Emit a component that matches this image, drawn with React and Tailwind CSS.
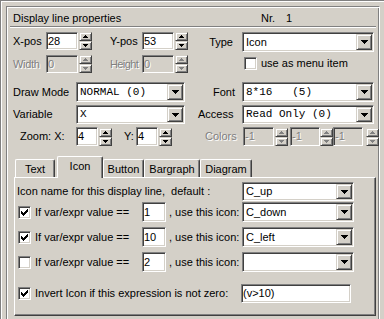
import React from "react";

const sunken =
  "border border-t-[#808080] border-l-[#808080] border-r-white border-b-white shadow-[inset_1px_1px_0_#404040,inset_-1px_-1px_0_#d4d0c8]";
const raised =
  "border border-t-[#d4d0c8] border-l-[#d4d0c8] border-r-[#404040] border-b-[#404040] shadow-[inset_1px_1px_0_#ffffff,inset_-1px_-1px_0_#808080]";
const dis = "text-[#808080] [text-shadow:1px_1px_0_#ffffff]";
const mono = "font-['Liberation_Mono','Courier_New',monospace] text-[11px]";

function Up({ color }) {
  return (
    <svg width="5" height="3" viewBox="0 0 5 3" className="block">
      <path d="M2 0h1v1h1v1h1v1H0V2h1V1h1z" fill={color} />
    </svg>
  );
}
function Down({ color }) {
  return (
    <svg width="5" height="3" viewBox="0 0 5 3" className="block">
      <path d="M0 0h5v1H4v1H3v1H2V2H1V1H0z" fill={color} />
    </svg>
  );
}

function Spin({ disabled, tall }) {
  const c = disabled ? "#808080" : "#000000";
  const half = tall
    ? "h-[10px] w-full flex items-center justify-center bg-[#d4d0c8] " + raised
    : "h-[9px] w-full flex items-center justify-center bg-[#d4d0c8] " + raised;
  return (
    <div className="flex flex-col w-[13px] shrink-0">
      <div className={half}>
        <Up color={c} />
      </div>
      <div className={half}>
        <Down color={c} />
      </div>
    </div>
  );
}

function Input({ value, w, h, disabled, className = "" }) {
  return (
    <div
      className={
        sunken +
        " shrink-0 flex items-center px-[1px] " +
        (disabled ? "bg-[#d4d0c8] " + dis : "bg-white text-black") +
        " " +
        w +
        " " +
        h +
        " " +
        className
      }
    >
      <span>{value}</span>
    </div>
  );
}

function Select({ value, w, h, isMono }) {
  return (
    <div className={sunken + " bg-white shrink-0 flex items-stretch p-[1px] " + w + " " + h}>
      <div className={"flex-1 flex items-center pl-[2px] whitespace-pre " + (isMono ? mono : "")}>
        {value}
      </div>
      <div className={raised + " w-[16px] bg-[#d4d0c8] flex items-center justify-center"}>
        <svg width="7" height="4" viewBox="0 0 7 4" className="block">
          <path d="M0 0h7v1H6v1H5v1H4v1H3V3H2V2H1V1H0z" fill="#000" />
        </svg>
      </div>
    </div>
  );
}

function Check({ checked }) {
  return (
    <div className={sunken + " w-[13px] h-[13px] bg-white shrink-0 flex items-center justify-center"}>
      {checked && (
        <svg width="7" height="7" viewBox="0 0 7 7" className="block">
          <path
            d="M6 0h1v1h-1z M5 1h2v1h-2z M0 2h1v1h-1z M4 2h3v1h-3z M0 3h2v1h-2z M3 3h3v1h-3z M0 4h5v1h-5z M1 5h3v1h-3z M2 6h1v1h-1z"
            fill="#000"
          />
        </svg>
      )}
    </div>
  );
}

function Tab({ label, w, selected }) {
  if (selected) {
    return (
      <div
        className={
          "relative z-10 -mb-[1px] h-[22px] bg-[#d4d0c8] border-l border-t border-r border-l-white border-t-white border-r-[#404040] rounded-t-[2px] shadow-[inset_-1px_0_0_#808080] flex justify-center pt-[3px] " +
          w
        }
      >
        {label}
      </div>
    );
  }
  return (
    <div
      className={
        "h-[18px] bg-[#d4d0c8] border-l border-t border-r border-l-white border-t-white border-r-[#404040] rounded-t-[2px] shadow-[inset_-1px_0_0_#808080] flex justify-center pt-[3px] " +
        w
      }
    >
      {label}
    </div>
  );
}

function IfRow({ checked, val, icon, mt }) {
  return (
    <div className={"flex items-center h-[20px] " + mt}>
      <div className="w-[20px] pl-[3px] flex items-center">
        <Check checked={checked} />
      </div>
      <div className="w-[107px]">If var/expr value ==</div>
      <Input value={val} w="w-[24px]" h="h-[20px]" />
      <div className="w-[76px] pl-[3px]">, use this icon:</div>
      <Select value={icon} w="w-[112px]" h="h-[20px]" />
    </div>
  );
}

export default function App() {
  return (
    <div className="w-[384px] h-[319px] overflow-hidden bg-[#d4d0c8] font-['Liberation_Sans',Arial,sans-serif] text-[11px] leading-[13px] text-black">
      <div className="w-full h-full border-l border-t border-[#808080]">
        <div className="w-full h-full border-l border-t border-white">
          {/* group box */}
          <div className="ml-[4px] mt-[4px] w-[374px] h-[320px] border border-t-[#808080] border-l-[#808080] border-r-white border-b-white shadow-[inset_1px_1px_0_#ffffff,inset_-1px_-1px_0_#808080]">
            {/* header */}
            <div className="h-[19px] pt-[3px] flex items-center pl-[6px]">
              <span className="w-[248px]">Display line properties</span>
              <span>Nr.</span>
              <span className="ml-[11px]">1</span>
            </div>
            <div className="ml-[3px] w-[366px] h-[2px] border-t border-b border-t-[#808080] border-b-white" />

            {/* row 1 */}
            <div className="mt-[4px] h-[20px] flex items-start pl-[6px]">
              <div className="w-[33px] h-[18px] flex items-center">X-pos</div>
              <Input value="28" w="w-[32px]" h="h-[18px]" />
              <div className="ml-[1px]">
                <Spin />
              </div>
              <div className="ml-[18px] w-[32px] h-[18px] flex items-center">Y-pos</div>
              <Input value="53" w="w-[32px]" h="h-[18px]" />
              <div className="ml-[1px]">
                <Spin />
              </div>
              <div className="w-[54px] h-[20px] flex items-center justify-end pr-[9px]">Type</div>
              <Select value="Icon" w="w-[132px]" h="h-[20px]" />
            </div>

            {/* row 2 */}
            <div className="mt-[3px] h-[18px] flex items-start pl-[6px]">
              <div className={"w-[33px] h-[18px] flex items-center tracking-[-0.3px] " + dis}>Width</div>
              <Input value="0" w="w-[32px]" h="h-[18px]" disabled />
              <div className="ml-[1px]">
                <Spin disabled />
              </div>
              <div className={"ml-[18px] w-[32px] h-[18px] flex items-center whitespace-nowrap tracking-[-0.6px] " + dis}>
                Height
              </div>
              <Input value="0" w="w-[32px]" h="h-[18px]" disabled />
              <div className="ml-[1px]">
                <Spin disabled />
              </div>
              <div className="ml-[56px] mt-[2px] flex items-center">
                <Check />
                <span className="ml-[4px]">use as menu item</span>
              </div>
            </div>

            {/* row 3 */}
            <div className="mt-[9px] h-[20px] flex items-center pl-[6px]">
              <div className="w-[63px]">Draw Mode</div>
              <Select value="NORMAL (0)" w="w-[109px]" h="h-[20px]" isMono />
              <div className="w-[57px] text-right pr-[7px]">Font</div>
              <Select value="8*16   (5)" w="w-[132px]" h="h-[20px]" isMono />
            </div>

            {/* row 4 */}
            <div className="mt-[3px] h-[19px] flex items-center pl-[6px]">
              <div className="w-[63px]">Variable</div>
              <Select value="X" w="w-[109px]" h="h-[19px]" isMono />
              <div className="w-[57px] pl-[13px]">Access</div>
              <Select value="Read Only (0)" w="w-[132px]" h="h-[19px]" isMono />
            </div>

            {/* row 5 */}
            <div className="mt-[3px] h-[19px] flex items-center pl-[6px]">
              <div className="w-[63px] pl-[7px]">Zoom: X:</div>
              <Input value="4" w="w-[22px]" h="h-[19px]" />
              <div className="ml-[1px]">
                <Spin />
              </div>
              <div className="ml-[12px] w-[12px]">Y:</div>
              <Input value="4" w="w-[22px]" h="h-[19px]" />
              <div className="ml-[1px]">
                <Spin />
              </div>
              <div className={"ml-[33px] w-[38px] " + dis}>Colors</div>
              <Input value="-1" w="w-[31px]" h="h-[19px]" disabled />
              <div className="ml-[1px]">
                <Spin disabled />
              </div>
              <Input value="-1" w="w-[30px]" h="h-[19px]" disabled className="ml-[2px]" />
              <Spin disabled />
              <Input value="-1" w="w-[30px]" h="h-[19px]" disabled />
              <div className="ml-[3px]">
                <Spin disabled />
              </div>
            </div>

            {/* tabs */}
            <div className="mt-[10px] ml-[8px] h-[21px] flex items-end">
              <Tab label="Text" w="w-[40px]" />
              <div className="ml-[2px]">
                <Tab label="Icon" w="w-[46px]" selected />
              </div>
              <Tab label="Button" w="w-[41px]" />
              <Tab label="Bargraph" w="w-[56px]" />
              <Tab label="Diagram" w="w-[52px]" />
            </div>

            {/* panel */}
            <div className="ml-[7px] w-[362px] h-[139px] border border-t-white border-l-white border-r-[#404040] border-b-[#404040] shadow-[inset_-1px_-1px_0_#808080]">
              <div className="mt-[4px] h-[19px] flex items-center">
                <div className="w-[227px] pl-[2px]">Icon name for this display line,&nbsp; default :</div>
                <Select value="C_up" w="w-[112px]" h="h-[19px]" />
              </div>
              <IfRow checked val="1" icon="C_down" mt="mt-[1px]" />
              <IfRow checked val="10" icon="C_left" mt="mt-[5px]" />
              <IfRow val="2" icon="" mt="mt-[5px]" />
              <div className="mt-[12px] h-[19px] flex items-center">
                <div className="w-[20px] pl-[3px] flex items-center">
                  <Check checked />
                </div>
                <div className="w-[206px]">Invert Icon if this expression is not zero:</div>
                <Input value="(v>10)" w="w-[110px]" h="h-[19px]" />
              </div>
            </div>
          </div>
        </div>
      </div>
    </div>
  );
}
